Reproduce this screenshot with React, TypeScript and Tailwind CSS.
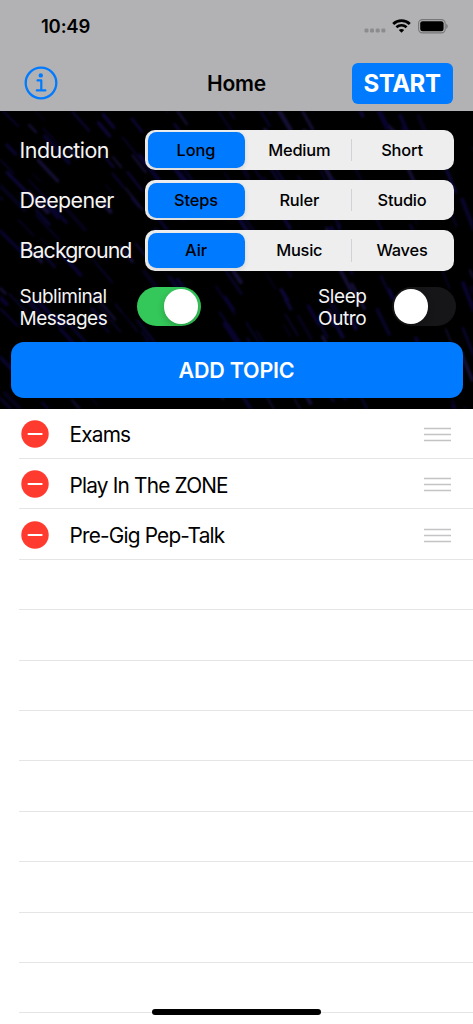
import { useState } from "react";
import clsx from "clsx";

const SETTINGS = [
  { label: "Induction", options: ["Long", "Medium", "Short"], spacing: "tracking-[-0.5px]" },
  { label: "Deepener", options: ["Steps", "Ruler", "Studio"], spacing: "tracking-[-0.6px]" },
  { label: "Background", options: ["Air", "Music", "Waves"], spacing: "tracking-[-0.95px]" },
];

const TOPICS = ["Exams", "Play In The ZONE", "Pre-Gig Pep-Talk"];
const EMPTY_ROWS = 9;

const COLORS = ["#08052a", "#0c0736", "#06031c", "#151038", "#090430"];

// fixed seed so that the rain looks the same on every render
function makeStreaks() {
  let seed = 29;
  const next = () => {
    seed = (seed * 16807) % 2147483647;
    return seed / 2147483647;
  };
  return Array.from({ length: 230 }, () => {
    const x = next() * 500 - 25;
    const y = next() * 320 - 20;
    const length = 10 + next() * 26;
    // streaks get steeper towards the right edge
    const angle = ((45 + (x / 473) * 24) * Math.PI) / 180;
    return {
      x1: x,
      y1: y,
      x2: x + Math.cos(angle) * length,
      y2: y + Math.sin(angle) * length,
      width: 1.3 + next() * 3,
      color: COLORS[Math.floor(next() * COLORS.length)],
    };
  });
}

const STREAKS = makeStreaks();

function Rain() {
  return (
    <svg
      className="absolute inset-0 h-full w-full blur-[0.8px]"
      viewBox="0 0 473 298"
      preserveAspectRatio="none"
      aria-hidden="true"
    >
      <g strokeLinecap="round">
        {STREAKS.map((s, i) => (
          <line
            key={i}
            x1={s.x1}
            y1={s.y1}
            x2={s.x2}
            y2={s.y2}
            stroke={s.color}
            strokeWidth={s.width}
          />
        ))}
      </g>
    </svg>
  );
}

function StatusBar() {
  return (
    <div className="flex h-[52px] items-center justify-between pr-[25.5px] pl-[41px]">
      <span className="text-[18.5px] leading-none font-semibold tracking-[-0.2px]">10:49</span>
      <div className="flex items-center">
        <svg className="mt-[9px] mr-[6.5px]" width="22" height="5" viewBox="0 0 22 5" fill="#8c8c8f">
          <rect x="0.5" y="0.5" width="4" height="4" rx="1.3" />
          <rect x="6" y="0.5" width="4" height="4" rx="1.3" />
          <rect x="11.7" y="0.5" width="4" height="4" rx="1.3" />
          <rect x="17.4" y="0.5" width="4" height="4" rx="1.3" />
        </svg>
        <svg className="mr-[6.5px]" width="19" height="14" viewBox="0 0 19 14" fill="none">
          <path d="M1.2 5C5.8 0.5 13.2 0.5 17.8 5" stroke="black" strokeWidth="2.8" />
          <path d="M4.4 8.3C7.3 5.6 11.7 5.6 14.6 8.3" stroke="black" strokeWidth="2.6" />
          <path d="M9.5 13.7L6.8 10.9C8.2 9.6 10.8 9.6 12.2 10.9Z" fill="black" />
        </svg>
        <svg width="30" height="15" viewBox="0 0 30 15">
          <rect x="0.6" y="0.6" width="26.6" height="13.3" rx="3.8" fill="none" stroke="#77777a" strokeWidth="1.1" />
          <rect x="2.2" y="2.2" width="23.4" height="10.1" rx="2.4" fill="black" />
          <path d="M28.3 4.9C30 5.3 30 9.2 28.3 9.6Z" fill="#6d6d70" />
        </svg>
      </div>
    </div>
  );
}

function InfoIcon() {
  return (
    <svg width="34" height="34" viewBox="0 0 34 34" fill="none" stroke="#007aff">
      <circle cx="17" cy="17" r="15.3" strokeWidth="2.3" />
      <circle cx="16.8" cy="9.4" r="2.2" fill="#007aff" stroke="none" />
      <path d="M13.5 14.4H17.3V24.4M12.8 24.4H21.4" strokeWidth="2.2" strokeLinecap="round" strokeLinejoin="round" />
    </svg>
  );
}

type SegmentedProps = {
  options: string[];
  value: number;
  onChange: (index: number) => void;
};

function Segmented({ options, value, onChange }: SegmentedProps) {
  return (
    <div className="flex h-[40.4px] w-[308.5px] rounded-[10px] bg-[#eeeeef] p-[2.5px]">
      {options.map((option, i) => (
        <button
          key={option}
          type="button"
          onClick={() => onChange(i)}
          className={clsx(
            "relative h-full text-[16.4px] text-black",
            i === 0 && "w-[97px]",
            i === 1 && "w-[106.5px] pl-[3px]",
            i === 2 && "flex-1 pl-[2px]",
            value === i
              ? "rounded-[8.5px] bg-[#007aff] font-medium tracking-[-0.1px] shadow-[0_2px_5px_rgba(0,0,0,0.1)]"
              : "font-[450] tracking-[-0.2px]"
          )}
        >
          {option}
          {i === 2 && value === 0 && (
            <span className="absolute top-[6.5px] bottom-[6.5px] left-0 w-px bg-[#d2d2d5]" />
          )}
        </button>
      ))}
    </div>
  );
}

function Toggle({ on, onChange }: { on: boolean; onChange: () => void }) {
  return (
    <button
      type="button"
      role="switch"
      aria-checked={on}
      onClick={onChange}
      className={clsx(
        "flex h-[39px] w-[64px] items-center rounded-full px-[2.5px]",
        on ? "justify-end bg-[#34c759]" : "bg-[#1c1c1e]/80"
      )}
    >
      <span className={clsx("size-[34.5px] rounded-full bg-white shadow-[0_3px_7px_rgba(0,0,0,0.2)]", !on && "-ml-px")} />
    </button>
  );
}

function TopicRow({ name }: { name: string }) {
  return (
    <li className="flex h-[50.4px] pl-[19px]">
      <div className="flex flex-1 items-center border-b border-[#e5e5e7] pt-px pr-[22px]">
        <svg className="ml-[1.5px] shrink-0" width="28" height="28" viewBox="0 0 28 28">
          <circle cx="14" cy="14" r="13.7" fill="#ff3b30" />
          <path d="M7.5 14H20.7" stroke="white" strokeWidth="2" strokeLinecap="round" />
        </svg>
        <span className="mt-[4px] ml-[21px] flex-1 text-[20.8px] leading-none tracking-[-0.8px]">{name}</span>
        <svg className="mt-px" width="27" height="15" viewBox="0 0 27 15" stroke="#c4c4c6" strokeWidth="1.7">
          <path d="M0 1.5H27M0 7.5H27M0 13.5H27" />
        </svg>
      </div>
    </li>
  );
}

export default function App() {
  const [selected, setSelected] = useState([0, 0, 0]);
  const [subliminal, setSubliminal] = useState(true);
  const [outro, setOutro] = useState(false);

  return (
    <div className="relative flex h-[1024px] w-[473px] flex-col overflow-hidden bg-white font-['Inter',sans-serif] text-black">
      <header className="h-[111px] shrink-0 bg-[#b2b2b4]">
        <StatusBar />
        <div className="grid h-[62px] grid-cols-3 items-center pt-[1px] pr-[20.5px] pl-[23.5px]">
          <button type="button" className="mb-[2px] justify-self-start">
            <InfoIcon />
          </button>
          <h1 className="justify-self-center pr-[3px] text-[21px] leading-none font-semibold tracking-[-0.2px]">Home</h1>
          <button
            type="button"
            className="h-[41.5px] w-[101px] justify-self-end rounded-[6px] bg-[#007aff] pt-px text-[24px] font-bold tracking-[-0.5px] text-white"
          >
            START
          </button>
        </div>
      </header>

      <section className="relative h-[297.7px] shrink-0 overflow-hidden bg-black">
        <Rain />
        <div className="relative pt-[18.7px]">
          <div className="flex flex-col gap-[10px] pr-[19.5px] pl-[19.5px]">
            {SETTINGS.map((setting, row) => (
              <div key={setting.label} className="flex items-center justify-between">
                <span className={clsx("mt-px text-[21.4px] leading-none text-[#f5f5f5]", setting.spacing)}>
                  {setting.label}
                </span>
                <Segmented
                  options={setting.options}
                  value={selected[row]}
                  onChange={(i) => setSelected(selected.map((v, r) => (r === row ? i : v)))}
                />
              </div>
            ))}
          </div>

          <div className="mt-[16px] flex h-[39px] items-center pl-[19.5px] text-[#f5f5f5]">
            <span className="w-[117px] pt-[3px] text-[19px] leading-[22px] tracking-[-0.5px]">
              Subliminal
              <br />
              Messages
            </span>
            <Toggle on={subliminal} onChange={() => setSubliminal(!subliminal)} />
            <span className="ml-[117.5px] w-[74px] pt-[3px] text-[19px] leading-[22px] tracking-[-0.4px]">
              Sleep
              <br />
              Outro
            </span>
            <Toggle on={outro} onChange={() => setOutro(!outro)} />
          </div>

          <button
            type="button"
            className="mx-[10.5px] mt-[15.9px] block h-[56.5px] w-[452px] rounded-[13px] bg-[#007aff] text-[21.5px] font-semibold tracking-[-0.2px] text-white"
          >
            ADD TOPIC
          </button>
        </div>
      </section>

      <ul>
        {TOPICS.map((topic) => (
          <TopicRow key={topic} name={topic} />
        ))}
        {Array.from({ length: EMPTY_ROWS }, (_, i) => (
          <li key={i} className="flex h-[50.4px] pl-[19px]">
            <div className="flex-1 border-b border-[#e5e5e7]" />
          </li>
        ))}
      </ul>

      <div className="absolute bottom-[9.5px] left-[152px] h-[6px] w-[169px] rounded-full bg-black" />
    </div>
  );
}
